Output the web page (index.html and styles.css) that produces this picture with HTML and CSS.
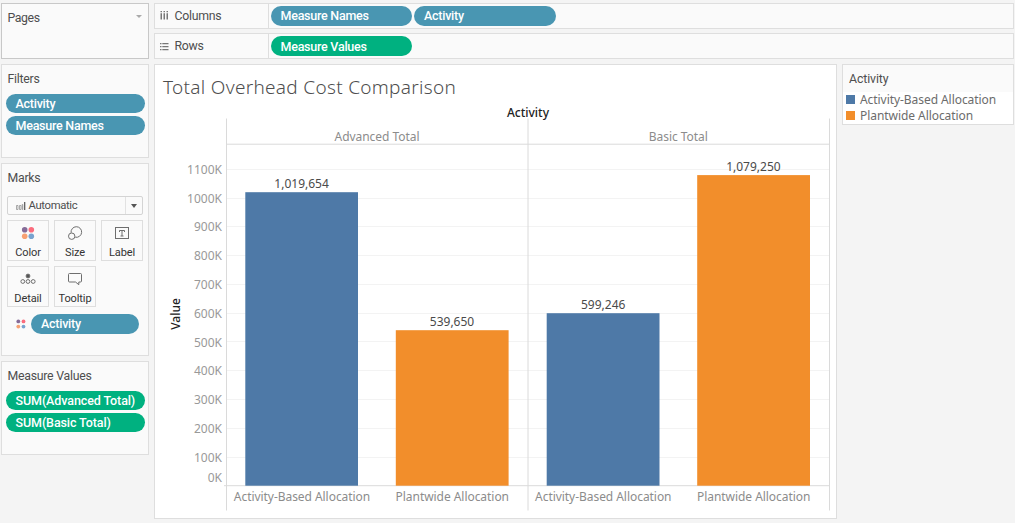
FILE: index.html
```html
<!DOCTYPE html>
<html lang="en">
    <head>
        <meta charset="utf-8">
        <title>Total Overhead Cost Comparison</title>
        <meta name="viewport" content="width=device-width, initial-scale=1.0">
        <link rel="stylesheet" href="styles.css">
    </head>
    <body>
        <div class="workspace">
            <aside class="cards">
                <section class="card card--pages">
                    <h2 class="card__title">Pages</h2>
                    <span class="caret caret--light"></span>
                </section>
                <section class="card card--filters">
                    <h2 class="card__title">Filters</h2>
                    <div class="pills">
                        <span class="pill">Activity</span>
                        <span class="pill">Measure Names</span>
                    </div>
                </section>
                <section class="card card--marks">
                    <h2 class="card__title">Marks</h2>
                    <div class="mark-type">
                        <svg class="mark-type__icon" width="10" height="8" viewBox="0 0 10 8">
                            <path d="M.5 3.500h1.500v4H.5zM3.500 3.500H5v4H3.500zM6.200 2.500h.6v5h-.6z"/>
                            <path class="thick" d="M8.700 0v8"/>
                        </svg>
                        <span class="mark-type__name">Automatic</span>
                        <span class="mark-type__toggle"><span class="caret"></span></span>
                    </div>
                    <div class="marks">
                        <div class="mark">
                            <svg width="16" height="16" viewBox="0 0 16 16">
                                <circle cx="4.700" cy="4.700" r="2.800" fill="#856b98"/>
                                <circle cx="11.300" cy="4.700" r="2.800" fill="#fb6c7d"/>
                                <circle cx="4.700" cy="11.300" r="2.800" fill="#f7a072"/>
                                <circle cx="11.300" cy="11.300" r="2.800" fill="#78a3cf"/>
                            </svg>
                            <span>Color</span>
                        </div>
                        <div class="mark">
                            <svg class="line" width="16" height="16" viewBox="0 0 16 16">
                                <path d="M4.100 7.800A5.300 5.300 0 1 1 8.200 12.200"/>
                                <circle cx="4.700" cy="11.200" r="3.200"/>
                            </svg>
                            <span>Size</span>
                        </div>
                        <div class="mark">
                            <svg class="line" width="16" height="16" viewBox="0 0 16 16">
                                <rect x="1.500" y="2.500" width="13" height="11"/>
                                <path d="M5.500 7v-1.500h5v1.500M8 5.500v5.500M6.500 11h3"/>
                            </svg>
                            <span>Label</span>
                        </div>
                        <div class="mark">
                            <svg class="line" width="16" height="16" viewBox="0 0 16 16">
                                <circle class="solid" cx="8" cy="5" r="1.900"/>
                                <circle cx="2.800" cy="10.500" r="1.900"/>
                                <circle cx="8" cy="10.500" r="1.900"/>
                                <circle cx="13.200" cy="10.500" r="1.900"/>
                            </svg>
                            <span>Detail</span>
                        </div>
                        <div class="mark">
                            <svg class="line" width="16" height="16" viewBox="0 0 16 16">
                                <path d="M2.500 2.500h11a1 1 0 0 1 1 1v6.500a1 1 0 0 1-1 1h-1.700v2.700l-3.300-2.700h-6a1 1 0 0 1-1-1v-6.500a1 1 0 0 1 1-1z"/>
                            </svg>
                            <span>Tooltip</span>
                        </div>
                    </div>
                    <div class="encoding">
                        <svg width="10" height="10" viewBox="0 0 10 10">
                            <circle cx="2.300" cy="2.400" r="1.900" fill="#856b98"/>
                            <circle cx="7.500" cy="2.400" r="1.900" fill="#fb6c7d"/>
                            <circle cx="2.300" cy="7.600" r="1.900" fill="#f7a072"/>
                            <circle cx="7.500" cy="7.600" r="1.900" fill="#78a3cf"/>
                        </svg>
                        <span class="pill">Activity</span>
                    </div>
                </section>
                <section class="card card--values">
                    <h2 class="card__title">Measure Values</h2>
                    <div class="pills">
                        <span class="pill pill--measure pill--sum">SUM(Advanced Total)</span>
                        <span class="pill pill--measure pill--sum">SUM(Basic Total)</span>
                    </div>
                </section>
            </aside>

            <main class="main">
                <div class="shelf">
                    <div class="shelf__name">
                        <svg width="9" height="9" viewBox="0 0 9 9">
                            <path d="M.5 2.200H2V8.500H.5zM3.500 2.200H5V8.500H3.500zM6.500 2.200H8V8.500H6.500zM.5 0H2v1.300H.5zM3.500 0H5v1.300H3.500zM6.500 0H8v1.300H6.500z"/>
                        </svg>
                        Columns
                    </div>
                    <div class="shelf__pills">
                        <span class="pill">Measure Names</span>
                        <span class="pill">Activity</span>
                    </div>
                </div>
                <div class="shelf shelf--rows">
                    <div class="shelf__name">
                        <svg width="9" height="9" viewBox="0 0 9 9">
                            <path d="M0 1h1.500v1.300H0zM2.300 1H8.500v1.300H2.300zM0 4h1.500v1.300H0zM2.300 4H8.500v1.300H2.300zM0 7h1.500v1.300H0zM2.300 7H8.500v1.300H2.300z"/>
                        </svg>
                        Rows
                    </div>
                    <div class="shelf__pills">
                        <span class="pill pill--measure">Measure Values</span>
                    </div>
                </div>

                <div class="view">
                    <section class="sheet">
                        <h1 class="sheet__title">Total Overhead Cost Comparison</h1>
                        <svg class="chart" width="681" height="418" viewBox="155 100 681 418">
                            <!-- gridlines, one per 100K -->
                            <path class="grid" d="M227 169.500h602M227 198.500h602M227 226.500h602M227 255.500h602M227 284.500h602M227 313.500h602M227 341.500h602M227 370.500h602M227 399.500h602M227 428.500h602M227 457.500h602"/>

                            <!-- pane borders -->
                            <path class="axis" d="M226.500 118.500v392M528 118.500v392M829.500 118.500v392M226.500 144.200h603M224 485.700h605"/>

                            <!-- bars -->
                            <rect class="based" x="245.300" y="192.200" width="112.700" height="293.500"/>
                            <rect class="plant" x="395.800" y="330.200" width="112.800" height="155.500"/>
                            <rect class="based" x="546.700" y="313.200" width="112.800" height="172.500"/>
                            <rect class="plant" x="697.200" y="175.100" width="112.800" height="310.600"/>

                            <g class="value">
                                <text x="301.600" y="188">1,019,654</text>
                                <text x="452" y="326">539,650</text>
                                <text x="603.200" y="309">599,246</text>
                                <text x="753.400" y="171">1,079,250</text>
                            </g>

                            <g class="field">
                                <text x="528" y="116.500">Activity</text>
                                <text transform="translate(180 314) rotate(-90)">Value</text>
                            </g>

                            <g class="label">
                                <text x="377" y="140.500">Advanced Total</text>
                                <text x="678.300" y="140.500">Basic Total</text>
                                <text x="302" y="501">Activity-Based Allocation</text>
                                <text x="452.300" y="501">Plantwide Allocation</text>
                                <text x="603.300" y="501">Activity-Based Allocation</text>
                                <text x="753.700" y="501">Plantwide Allocation</text>
                            </g>

                            <g class="tick">
                                <text x="222" y="174">1100K</text>
                                <text x="222" y="202.700">1000K</text>
                                <text x="222" y="231">900K</text>
                                <text x="222" y="260.300">800K</text>
                                <text x="222" y="289">700K</text>
                                <text x="222" y="318">600K</text>
                                <text x="222" y="346.500">500K</text>
                                <text x="222" y="375">400K</text>
                                <text x="222" y="404">300K</text>
                                <text x="222" y="433">200K</text>
                                <text x="222" y="461.700">100K</text>
                                <text x="222" y="482">0K</text>
                            </g>
                        </svg>
                    </section>

                    <aside class="legend">
                        <h2 class="legend__title">Activity</h2>
                        <ul class="legend__items">
                            <li><i class="swatch swatch--based"></i>Activity-Based Allocation</li>
                            <li><i class="swatch swatch--plant"></i>Plantwide Allocation</li>
                        </ul>
                    </aside>
                </div>
            </main>
        </div>
    </body>
</html>
```

FILE: styles.css
```css
:root {
    --font-ui: Roboto, Arial, sans-serif;
    --font-viz: 'Noto Sans', 'Open Sans', sans-serif;

    --color-page: #f4f4f4;
    --color-card: #fafafa;
    --color-border: #dedede;
    --color-text: #4e4e4e;
    --color-dimension: #4996b2;
    --color-measure: #00b180;
    --color-based: #4e79a7;
    --color-plant: #f28e2b;
}
* {
    box-sizing: border-box;
}
body {
    margin: 0;
    background: var(--color-page);
    color: var(--color-text);
    font: 12.3px/16px var(--font-ui);
    overflow: hidden;
}
h1, h2 {
    margin: 0;
    font-weight: 400;
}
svg {
    display: block;
    flex: none;
}
.workspace {
    display: flex;
    gap: 5px;
    height: 523px;
    padding: 3px 1px 3px 1px;
}

/* left side cards */
.cards {
    display: flex;
    flex-direction: column;
    gap: 5px;
    width: 148px;
}
.card {
    border: 1px solid var(--color-border);
    background: var(--color-card);
}
.card__title {
    padding-left: 5.500px;
    font-size: 12.3px;
    line-height: 16px;
    letter-spacing: -.25px;
}
.card--pages {
    display: flex;
    justify-content: space-between;
    height: 56px;
    padding: 6px 6px 0 0;
    border-color: #c8c8c8;
}
.card--filters {
    height: 94px;
    padding-top: 6px;
}
.card--marks {
    height: 193px;
    padding-top: 6px;
}
.card--values {
    height: 94px;
    padding-top: 6px;
}
.card--pages .card__title {
    letter-spacing: -.4px;
}
.caret {
    width: 0;
    height: 0;
    border: 3.5px solid transparent;
    border-top: 4px solid #555;
    border-bottom: 0;
}
.caret--light {
    border-width: 3px;
    border-top: 3px solid #aaa;
    border-bottom: 0;
    margin-top: 5px;
}

/* pills */
.pill {
    display: block;
    height: 19.500px;
    padding-left: 10px;
    border-radius: 10px;
    background: var(--color-dimension);
    color: #fff;
    font-size: 12.5px;
    font-weight: 500;
    line-height: 20px;
    letter-spacing: -.25px;
    white-space: nowrap;
}
.pill--measure {
    background: var(--color-measure);
}
.pill--sum {
    letter-spacing: -.1px;
}
.pills {
    display: grid;
    gap: 2.500px;
    padding: 6.500px 3.500px 0 3.500px;
}

/* marks card */
.mark-type {
    display: flex;
    align-items: center;
    width: 136px;
    height: 19px;
    margin: 10px 0 0 5px;
    padding-left: 8px;
    border: 1px solid #d4d4d4;
    border-radius: 2px;
    font-size: 11.3px;
    letter-spacing: -.35px;
}
.mark-type__icon {
    fill: none;
    stroke: #888;
    stroke-width: .7;
}
.mark-type__icon .thick {
    stroke: #555;
    stroke-width: 1.2;
}
.mark-type__name {
    flex: 1;
    padding-left: 2.500px;
    line-height: 15px;
    margin-top: -1px;
}
.mark-type__toggle {
    display: grid;
    place-items: center;
    width: 17px;
    height: 17px;
    border-left: 1px solid #e2e2e2;
}
.marks {
    display: grid;
    grid-template-columns: repeat(3, 42px);
    gap: 5px;
    padding: 5px 0 0 5px;
}
.mark {
    display: flex;
    flex-direction: column;
    align-items: center;
    height: 41px;
    padding-top: 4px;
    border: 1px solid var(--color-border);
    font-size: 11px;
    line-height: 14px;
    letter-spacing: -.1px;
    color: #333;
}
.mark span {
    padding-top: 5px;
}
.line {
    fill: none;
    stroke: #6e6e6e;
    stroke-width: 1;
}
.line .solid {
    fill: #555;
}
.encoding {
    display: flex;
    align-items: center;
    gap: 5px;
    padding: 7px 9px 0 14px;
}
.encoding .pill {
    flex: 1;
}

/* shelves */
.main {
    display: flex;
    flex: 1;
    flex-direction: column;
}
.shelf {
    display: flex;
    height: 26px;
    margin-bottom: 4px;
    border: 1px solid var(--color-border);
    background: var(--color-card);
}
.shelf--rows {
    margin-bottom: 5px;
}
.shelf__name {
    display: flex;
    align-items: center;
    gap: 5.500px;
    width: 114px;
    padding-left: 5px;
    border-right: 1px solid var(--color-border);
    letter-spacing: -.25px;
}
.shelf--rows .shelf__name,
.shelf--rows .pill {
    padding-top: 1px;
    line-height: 19px;
}
.shelf__name svg {
    fill: #777;
    margin-top: -1px;
}
.shelf__pills {
    display: flex;
    align-items: center;
    gap: 2px;
    padding-left: 1.500px;
}
.shelf__pills .pill {
    width: 141.500px;
}

/* sheet and chart */
.view {
    display: flex;
    align-items: flex-start;
    gap: 5px;
}
.sheet {
    width: 683px;
    height: 455px;
    border: 1px solid var(--color-border);
    background: #fff;
}
.sheet__title {
    height: 35px;
    padding: 9px 0 0 8px;
    font: 300 19px/26px var(--font-viz);
    letter-spacing: .3px;
    white-space: nowrap;
}
.chart text {
    font: 12px var(--font-viz);
    text-anchor: middle;
}
.grid {
    stroke: #f3f3f3;
}
.axis {
    fill: none;
    stroke: #dadada;
}
.based {
    fill: var(--color-based);
}
.plant {
    fill: var(--color-plant);
}
.chart .value text {
    fill: #4a4a4a;
}
.chart .field text {
    fill: #222;
    font-weight: 500;
}
.chart .label text {
    fill: #8c8c8c;
    letter-spacing: -.05px;
}
.chart .tick text {
    fill: #999;
    text-anchor: end;
}

/* legend */
.legend {
    width: 172px;
    height: 61px;
    border: 1px solid var(--color-border);
    background: #fff;
}
.legend__title {
    height: 27px;
    padding: 6px 0 0 6px;
    background: var(--color-card);
    font-size: 12.3px;
    line-height: 16px;
    letter-spacing: -.1px;
}
.legend__items {
    margin: 0;
    padding: 0 0 0 3px;
    list-style: none;
    font: 12px/16px var(--font-viz);
    letter-spacing: -.06px;
    color: #6c6c6c;
}
.legend__items li {
    display: flex;
    align-items: center;
    gap: 5px;
    white-space: nowrap;
}
.swatch {
    width: 9px;
    height: 9px;
    margin-top: -1px;
}
.swatch--based {
    background: var(--color-based);
}
.swatch--plant {
    background: var(--color-plant);
}
```
